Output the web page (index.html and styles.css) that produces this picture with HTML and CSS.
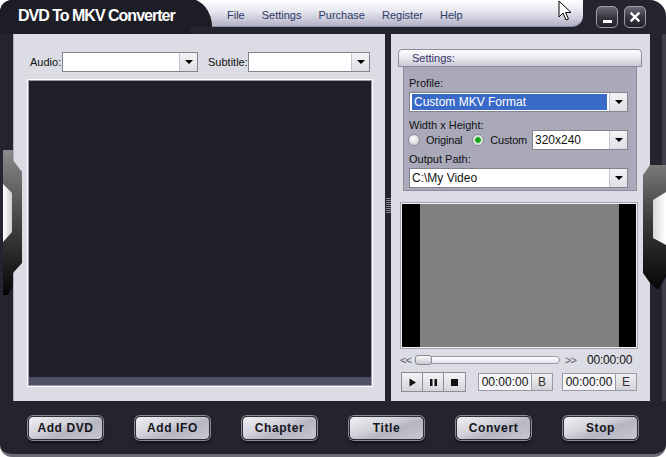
FILE: index.html
```html
<!DOCTYPE html>
<html>
<head>
<meta charset="utf-8">
<title>DVD To MKV Converter</title>
<link rel="stylesheet" href="styles.css">
</head>
<body>
<div class="window">
  <div class="titlebar">
    <div class="apptitle">DVD To MKV Converter</div>
    <nav class="menubar">
      <span class="menu-item">File</span>
      <span class="menu-item">Settings</span>
      <span class="menu-item">Purchase</span>
      <span class="menu-item">Register</span>
      <span class="menu-item">Help</span>
    </nav>
    <div class="winbtns">
      <div class="wbtn"><span class="minbar"></span></div>
      <div class="wbtn">
        <svg width="12" height="12" viewBox="0 0 12 12"><path d="M2.5 2.5 L9.5 9.5 M9.5 2.5 L2.5 9.5" stroke="#fff" stroke-width="2.4" stroke-linecap="square"/></svg>
      </div>
    </div>
  </div>

  <div class="main">
    <div class="side side-left"></div>

    <section class="left-panel">
      <div class="selectors">
        <span class="lbl">Audio:</span>
        <div class="combo combo-audio"><div class="combo-val"></div><div class="combo-btn"><i class="tri"></i></div></div>
        <span class="lbl lbl-sub">Subtitle:</span>
        <div class="combo combo-sub"><div class="combo-val"></div><div class="combo-btn"><i class="tri"></i></div></div>
      </div>
      <div class="video">
        <div class="video-screen"></div>
        <div class="video-bar"></div>
      </div>
    </section>

    <div class="splitter"><div class="grip"></div></div>

    <section class="right-panel">
      <div class="settings-head">Settings:</div>
      <div class="settings-box">
        <div class="glbl">Profile:</div>
        <div class="combo combo-wide"><div class="combo-val"><span class="selected">Custom MKV Format</span></div><div class="combo-btn"><i class="tri"></i></div></div>
        <div class="glbl glbl-2">Width x Height:</div>
        <div class="radio-row">
          <span class="radio"></span><span class="rtext">Original</span>
          <span class="radio checked"></span><span class="rtext">Custom</span>
          <div class="combo combo-size"><div class="combo-val">320x240</div><div class="combo-btn"><i class="tri"></i></div></div>
        </div>
        <div class="glbl glbl-3">Output Path:</div>
        <div class="combo combo-wide"><div class="combo-val">C:\My Video</div><div class="combo-btn"><i class="tri"></i></div></div>
      </div>

      <div class="preview"><div class="preview-inner"></div></div>

      <div class="slider-row">
        <span class="arrows">&lt;&lt;</span>
        <div class="track"><div class="thumb"></div></div>
        <span class="arrows arrows-r">&gt;&gt;</span>
        <span class="time">00:00:00</span>
      </div>

      <div class="ctrl-row">
        <div class="transport">
          <div class="tbtn"><svg width="9" height="9" viewBox="0 0 9 9"><path d="M1.5 0.5 L8 4.5 L1.5 8.5 Z" fill="#111"/></svg></div>
          <div class="tbtn"><svg width="9" height="9" viewBox="0 0 9 9"><rect x="1" y="1" width="2.5" height="7" fill="#111"/><rect x="5.5" y="1" width="2.5" height="7" fill="#111"/></svg></div>
          <div class="tbtn"><svg width="9" height="9" viewBox="0 0 9 9"><rect x="1" y="1" width="7" height="7" fill="#111"/></svg></div>
        </div>
        <div class="timebox">00:00:00</div>
        <div class="mark">B</div>
        <div class="timebox timebox-2">00:00:00</div>
        <div class="mark">E</div>
      </div>
    </section>

    <div class="side side-right"></div>
  </div>

  <div class="actions">
    <div class="abtn">Add DVD</div>
    <div class="abtn">Add IFO</div>
    <div class="abtn">Chapter</div>
    <div class="abtn">Title</div>
    <div class="abtn">Convert</div>
    <div class="abtn">Stop</div>
  </div>

  <svg class="handle handle-left" width="24" height="145" viewBox="0 0 24 145">
    <defs>
      <linearGradient id="hgl" x1="0" y1="0" x2="0" y2="1">
        <stop offset="0" stop-color="#8a8a8a"/>
        <stop offset="0.45" stop-color="#4a4a4a"/>
        <stop offset="1" stop-color="#050505"/>
      </linearGradient>
      <linearGradient id="hwl" x1="0" y1="0" x2="1" y2="0">
        <stop offset="0" stop-color="#ffffff"/>
        <stop offset="1" stop-color="#cfcfcf"/>
      </linearGradient>
    </defs>
    <path d="M3 0 L13 0 L13 10 L22 22 L22 113 L13 123 L13 136 L8 145 L3 145 Z" fill="url(#hgl)"/>
    <path d="M3 34 L12 43 L12 82 L3 92 Z" fill="url(#hwl)"/>
  </svg>

  <svg class="handle handle-right" width="26" height="128" viewBox="0 0 26 128">
    <defs>
      <linearGradient id="hgr" x1="0" y1="0" x2="0" y2="1">
        <stop offset="0" stop-color="#7a7a7a"/>
        <stop offset="0.45" stop-color="#3a3a3a"/>
        <stop offset="1" stop-color="#050505"/>
      </linearGradient>
      <linearGradient id="hwr" x1="0" y1="0" x2="1" y2="0">
        <stop offset="0" stop-color="#d8d8d8"/>
        <stop offset="1" stop-color="#ffffff"/>
      </linearGradient>
    </defs>
    <path d="M10 0 L26 0 L26 112 L18 125 L10 118 L3 108 L3 10 Z" fill="url(#hgr)"/>
    <path d="M13 35 L26 27 L26 80 L13 73 Z" fill="url(#hwr)"/>
  </svg>

  <svg class="cursor" width="14" height="22" viewBox="0 0 14 22">
    <path d="M1 1 L1 17 L5 13 L8 20 L10.5 19 L7.5 12.5 L13 12.5 Z" fill="#fff" stroke="#000" stroke-width="1"/>
  </svg>
</div>
</body>
</html>
```

FILE: styles.css
```css
* { box-sizing: border-box; }
html, body { margin: 0; padding: 0; background: #ffffff; }
body { font-family: "Liberation Sans", Arial, sans-serif; font-size: 11px; color: #111; }

.window {
  position: relative;
  width: 666px;
  height: 457px;
  background: #23242e;
  border-radius: 12px 16px 12px 12px;
  border-bottom: 3px solid #6a6b76;
  display: flex;
  flex-direction: column;
  overflow: hidden;
}

/* title bar */
.titlebar { height: 34px; display: flex; flex-shrink: 0; }
.apptitle {
  width: 190px;
  padding-left: 18px;
  color: #fff;
  font-weight: bold;
  font-size: 16px;
  letter-spacing: -1px;
  line-height: 31px;
  background: #1c1d25;
}
.menubar {
  position: relative;
  width: 393px;
  height: 27px;
  display: flex;
  align-items: center;
  gap: 17px;
  padding: 3px 0 0 37px;
  background: linear-gradient(#ffffff 0%, #e6e6ef 45%, #b2b2c6 100%);
  border-bottom-right-radius: 11px;
  border-bottom: 1px solid #8c8ca2;
  color: #2e3a66;
  font-size: 11px;
}
.menubar::before {
  content: "";
  position: absolute;
  left: 0; bottom: -1px;
  width: 22px; height: 28px;
  background: #1c1d25;
  border-top-right-radius: 22px 28px;
}
.menu-item { position: relative; }
.winbtns { display: flex; gap: 6px; padding: 6px 0 0 13px; }
.wbtn {
  width: 22px; height: 22px;
  border: 1px solid #9c9caa;
  border-radius: 5px;
  background: linear-gradient(#6a6a78, #34343e 55%, #24242c);
  display: flex; align-items: center; justify-content: center;
}
.minbar { width: 9px; height: 3px; background: #fff; margin-top: 8px; }

/* main */
.main { display: flex; height: 367px; flex-shrink: 0; }
.side { background: #23242e; }
.side-left { width: 13px; }
.side-right { width: 16px; box-shadow: inset -4px 0 0 #3e3f4a; }

.left-panel {
  width: 372px;
  background: #dcdce4;
  padding: 18px 13px 0 13px;
  border-left: 1px solid #aeaebc;
}
.selectors { display: flex; align-items: center; height: 20px; padding-left: 3px; }
.lbl { width: 32px; font-size: 11px; }
.lbl-sub { width: 40px; margin-left: 10px; }

.combo {
  height: 20px;
  display: flex;
  background: #fff;
  border: 1px solid #7f8490;
}
.combo-audio { width: 136px; }
.combo-sub { width: 122px; }
.combo-val { flex: 1; padding: 2px 2px; font-size: 12px; line-height: 14px; white-space: nowrap; overflow: hidden; }
.combo-btn {
  width: 18px;
  background: linear-gradient(#f4f4f6, #dedee4);
  border-left: 1px solid #c4c4cc;
  display: flex; align-items: center; justify-content: center;
}
.tri { width: 0; height: 0; border-left: 4px solid transparent; border-right: 4px solid transparent; border-top: 4px solid #000; }

.video {
  margin-top: 7px;
  width: 346px;
  height: 308px;
  border: 1px solid #ffffff;
  box-shadow: inset 0 0 0 1px #9a9aaa;
  padding: 1px;
  display: flex;
  flex-direction: column;
  background: #1f2029;
}
.video-screen { flex: 1; background: #1f2029; }
.video-bar { height: 8px; background: #4e4f64; }

.splitter { width: 6px; background: #23242e; display: flex; justify-content: center; padding-top: 164px; }
.grip {
  width: 5px; height: 15px;
  background: repeating-linear-gradient(#8a8a96 0 1px, transparent 1px 2px);
}

/* right panel */
.right-panel {
  width: 259px;
  background: #dcdce4;
  padding: 15px 0 0 7px;
}
.settings-head {
  width: 244px;
  height: 18px;
  padding-left: 13px;
  line-height: 17px;
  font-size: 11px;
  color: #34346c;
  border: 1px solid #8c8c9c;
  border-radius: 4px 4px 0 0;
  background: linear-gradient(#fdfdfe 0%, #eaeaf0 45%, #c9c9d4 100%);
}
.settings-box {
  margin-left: 5px;
  width: 234px;
  background: #a9a9ba;
  border: 1px solid #8d8d9e;
  border-top: none;
  padding: 10px 8px 2px 5px;
}
.glbl { font-size: 11px; line-height: 12px; color: #111; }
.settings-box .combo { margin-top: 3px; }
.glbl-2 { margin-top: 7px; }
.glbl-3 { margin-top: 3px; }
.combo-wide { width: 219px; }
.selected { display: block; background: #3a6ac8; color: #fff; margin: -1px 0; padding: 1px 2px; font-size: 12px; line-height: 14px; }
.radio-row { display: flex; align-items: center; height: 20px; margin-top: -1px; width: 219px; }
.radio-row .combo-size { margin-top: 0; width: 96px; margin-left: auto; flex-shrink: 0; }
.radio {
  flex-shrink: 0;
  width: 12px; height: 12px;
  border-radius: 50%;
  border: 1px solid #8a8a96;
  background: radial-gradient(circle at 40% 35%, #ffffff, #c6c6ce);
  margin-left: -1px;
}
.radio.checked {
  margin-left: 10px;
  background: radial-gradient(circle, #1aa31a 0 2.5px, #9ae09a 3px, #ececf0 4px, #c6c6ce);
}
.rtext { margin-left: 6px; font-size: 11px; letter-spacing: -0.2px; white-space: nowrap; }

.preview {
  margin-top: 12px;
  margin-left: 3px;
  width: 236px;
  height: 145px;
  border: 1px solid #f2f2f6;
  box-shadow: 0 0 0 1px #a4a4b0;
}
.preview-inner {
  width: 100%; height: 100%;
  background: #808080;
  border-left: 18px solid #000;
  border-right: 17px solid #000;
}

.slider-row { display: flex; align-items: center; height: 12px; margin-top: 6px; margin-left: 2px; font-size: 11px; color: #5a5a6a; }
.arrows { width: 10px; letter-spacing: -1px; }
.track {
  position: relative;
  margin-left: 5px;
  width: 145px; height: 8px;
  border: 1px solid #9a9aa6;
  border-radius: 4px;
  background: linear-gradient(#ffffff, #e2e2ea);
}
.thumb {
  position: absolute; left: -1px; top: -2px;
  width: 17px; height: 10px;
  border: 1px solid #8a8a96;
  border-radius: 3px;
  background: linear-gradient(#fafafa, #c8c8d0);
}
.arrows-r { margin-left: 5px; }
.time { margin-left: 12px; font-size: 12px; color: #111; letter-spacing: -0.2px; }

.ctrl-row { display: flex; align-items: center; height: 18px; margin-top: 7px; margin-left: 3px; }
.transport { display: flex; border: 1px solid #8c8c96; }
.tbtn {
  width: 21px; height: 18px;
  background: linear-gradient(#f4f4f6, #d4d4da);
  border-right: 1px solid #8c8c96;
  display: flex; align-items: center; justify-content: center;
}
.tbtn:last-child { border-right: none; }
.timebox {
  margin-left: 12px;
  width: 54px; height: 18px;
  border: 1px solid #9a9aa6;
  background: #f6f6f8;
  font-size: 12px; line-height: 16px; text-align: center;
}
.timebox-2 { margin-left: 9px; }
.mark {
  width: 21px; height: 18px;
  border: 1px solid #9a9aa6;
  border-left: none;
  background: linear-gradient(#f0f0f2, #d2d2d8);
  font-size: 12px; line-height: 16px; text-align: center; color: #333;
}

/* bottom buttons */
.actions { display: flex; gap: 32px; padding: 15px 0 0 28px; flex: 1; }
.abtn {
  width: 75px; height: 24px;
  border: 1px solid #2e2e36;
  border-radius: 5px;
  box-shadow: 0 0 0 1px #8a8a96, 0 3px 3px rgba(0,0,0,0.6);
  background: linear-gradient(160deg, #f0f0f4 0%, #d2d2da 40%, #b6b6c2 60%, #c8c8d2 100%);
  text-align: center;
  font-weight: bold;
  font-size: 12px;
  letter-spacing: 0.6px;
  line-height: 22px;
  color: #15151c;
}

/* overlays */
.handle { position: absolute; }
.handle-left { left: 0; top: 150px; }
.handle-right { left: 640px; top: 165px; }
.cursor { position: absolute; left: 558px; top: 0; }
```
